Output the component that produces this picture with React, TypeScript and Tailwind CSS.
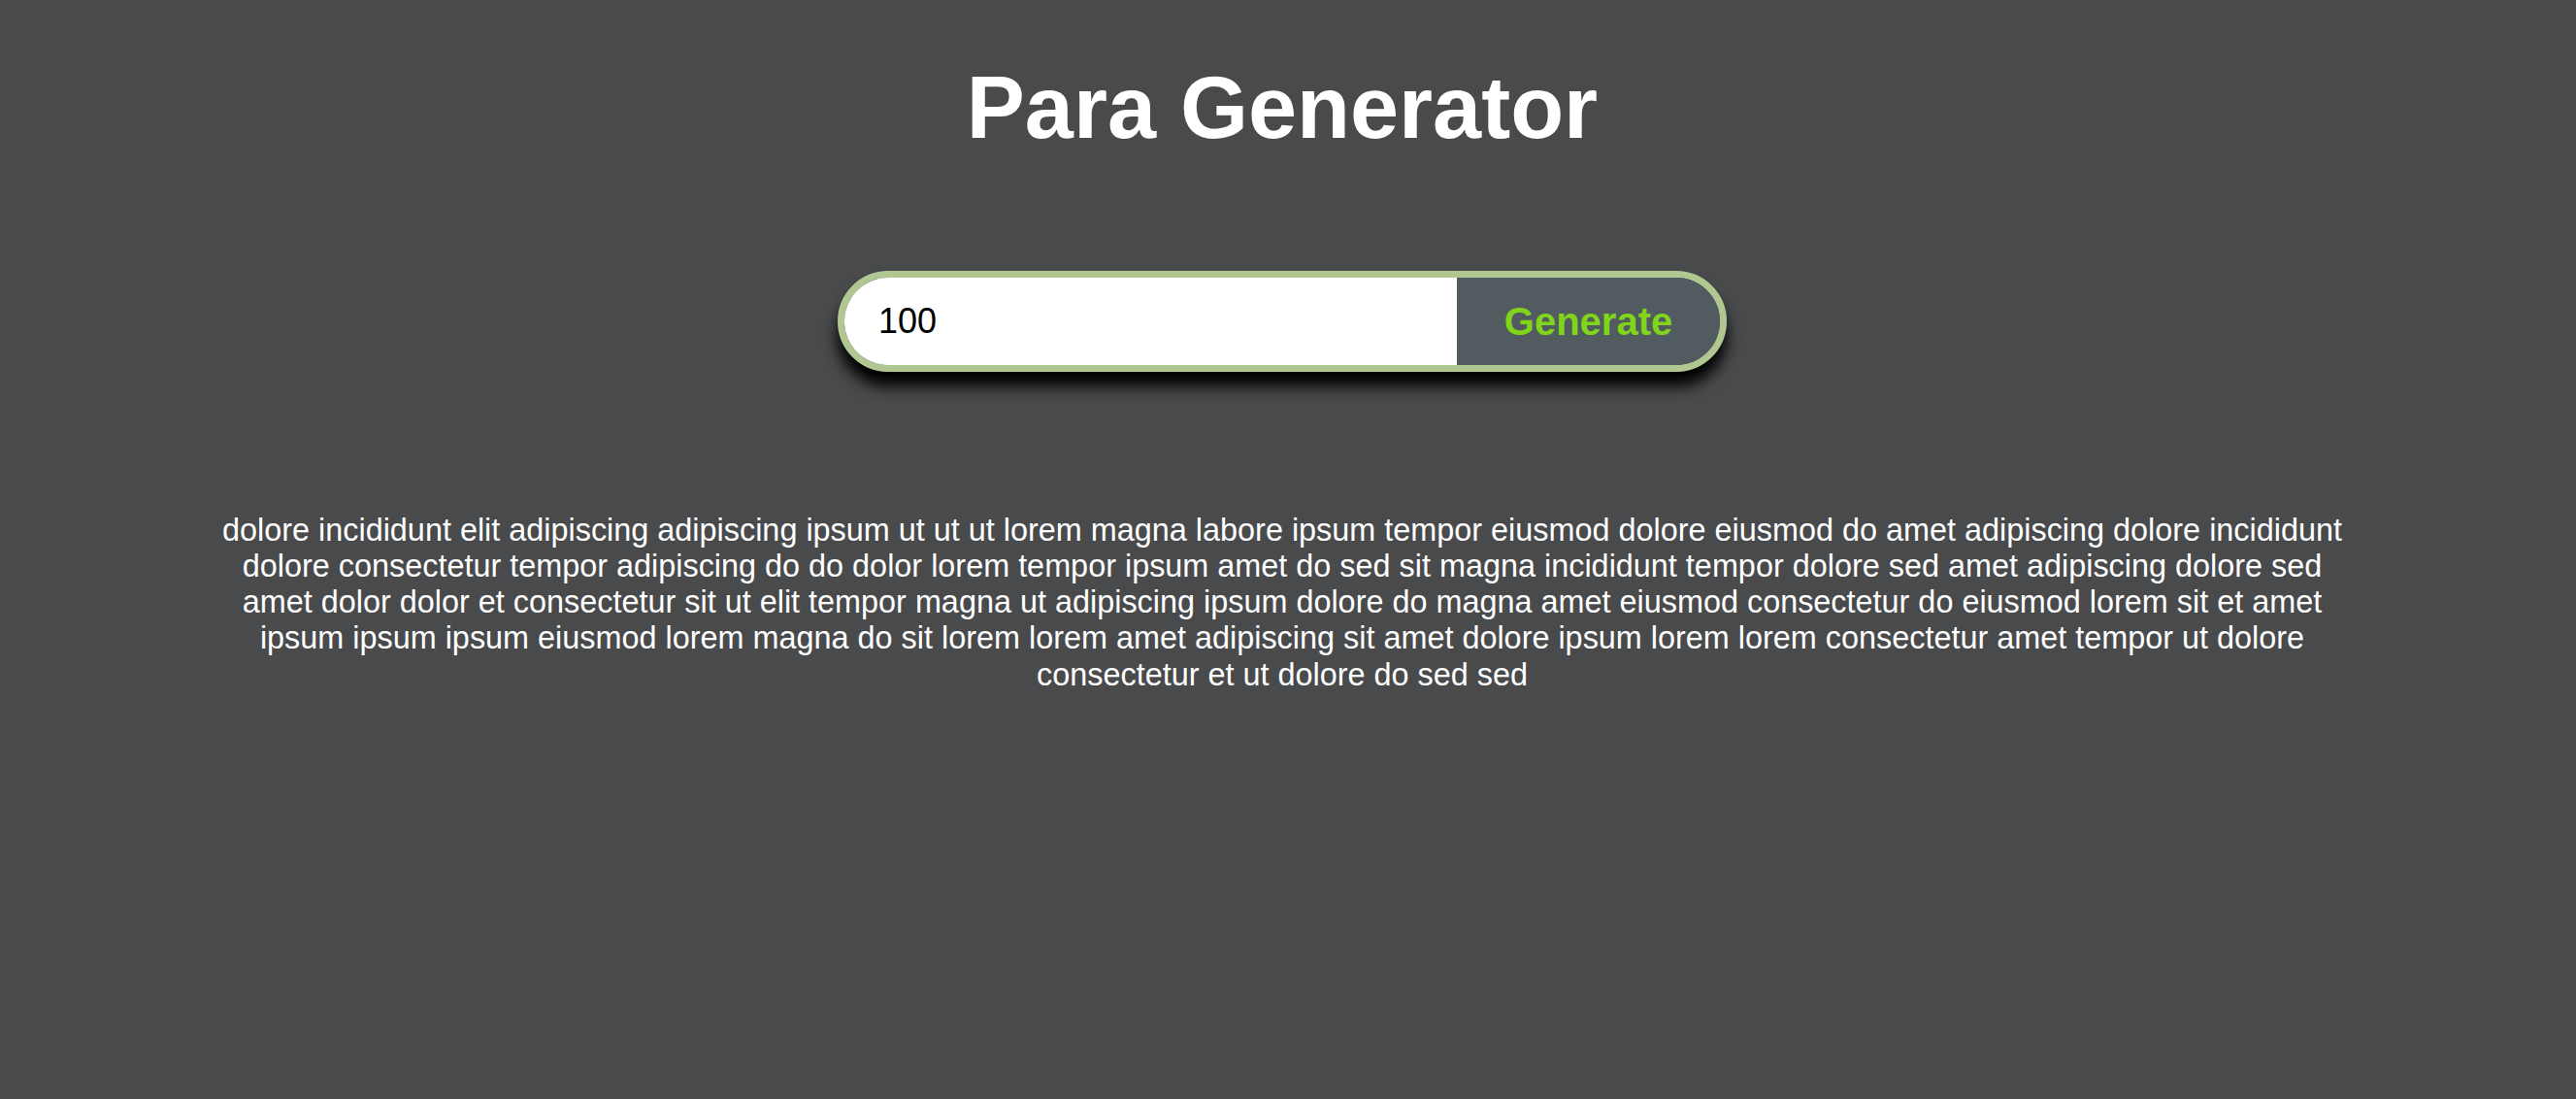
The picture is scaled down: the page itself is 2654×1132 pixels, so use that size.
import { useState } from "react";

const words = ["lorem", "ipsum", "dolor", "sit", "amet", "consectetur", "adipiscing", "elit", "sed", "do", "eiusmod", "tempor", "incididunt", "ut", "labore", "et", "dolore", "magna"];

const initialText =
    "dolore incididunt elit adipiscing adipiscing ipsum ut ut ut lorem magna labore ipsum tempor eiusmod dolore eiusmod do amet adipiscing dolore incididunt dolore consectetur tempor adipiscing do do dolor lorem tempor ipsum amet do sed sit magna incididunt tempor dolore sed amet adipiscing dolore sed amet dolor dolor et consectetur sit ut elit tempor magna ut adipiscing ipsum dolore do magna amet eiusmod consectetur do eiusmod lorem sit et amet ipsum ipsum ipsum eiusmod lorem magna do sit lorem lorem amet adipiscing sit amet dolore ipsum lorem lorem consectetur amet tempor ut dolore consectetur et ut dolore do sed sed"

export default function App() {
    const [count, setCount] = useState("100")
    const [para, setPara] = useState(initialText)

    const generate = () => {
        const n = parseInt(count) || 0
        const out = []
        for (let i = 0; i < n; i++) {
            out.push(words[Math.floor(Math.random() * words.length)])
        }
        setPara(out.join(" "))
    }

    return (
        <div className="min-h-screen bg-[#494a4c] pr-3 font-['Liberation_Sans',Arial,sans-serif] text-white">
            <h1 className="pt-[60px] text-center text-[90px] font-bold leading-[1.15]">Para Generator</h1>

            <div className="mx-auto mt-[115px] flex h-[104px] w-[916px] overflow-hidden rounded-full border-[7px] border-[#b1c791] shadow-[0_15px_15px_#000]">
                <input
                    type="number"
                    value={count}
                    onChange={(e) => setCount(e.target.value)}
                    className="w-[631px] bg-white pl-[35px] text-[36px] text-black outline-none [appearance:textfield] [&::-webkit-inner-spin-button]:appearance-none"
                />
                <button onClick={generate} className="flex-1 bg-[#525b60] text-[40px] font-bold text-[#80d41a]">
                    Generate
                </button>
            </div>

            <p className="mx-auto mt-[145px] w-[2205px] text-center text-[32.4px] leading-[1.15]">{para}</p>
        </div>
    )
}
